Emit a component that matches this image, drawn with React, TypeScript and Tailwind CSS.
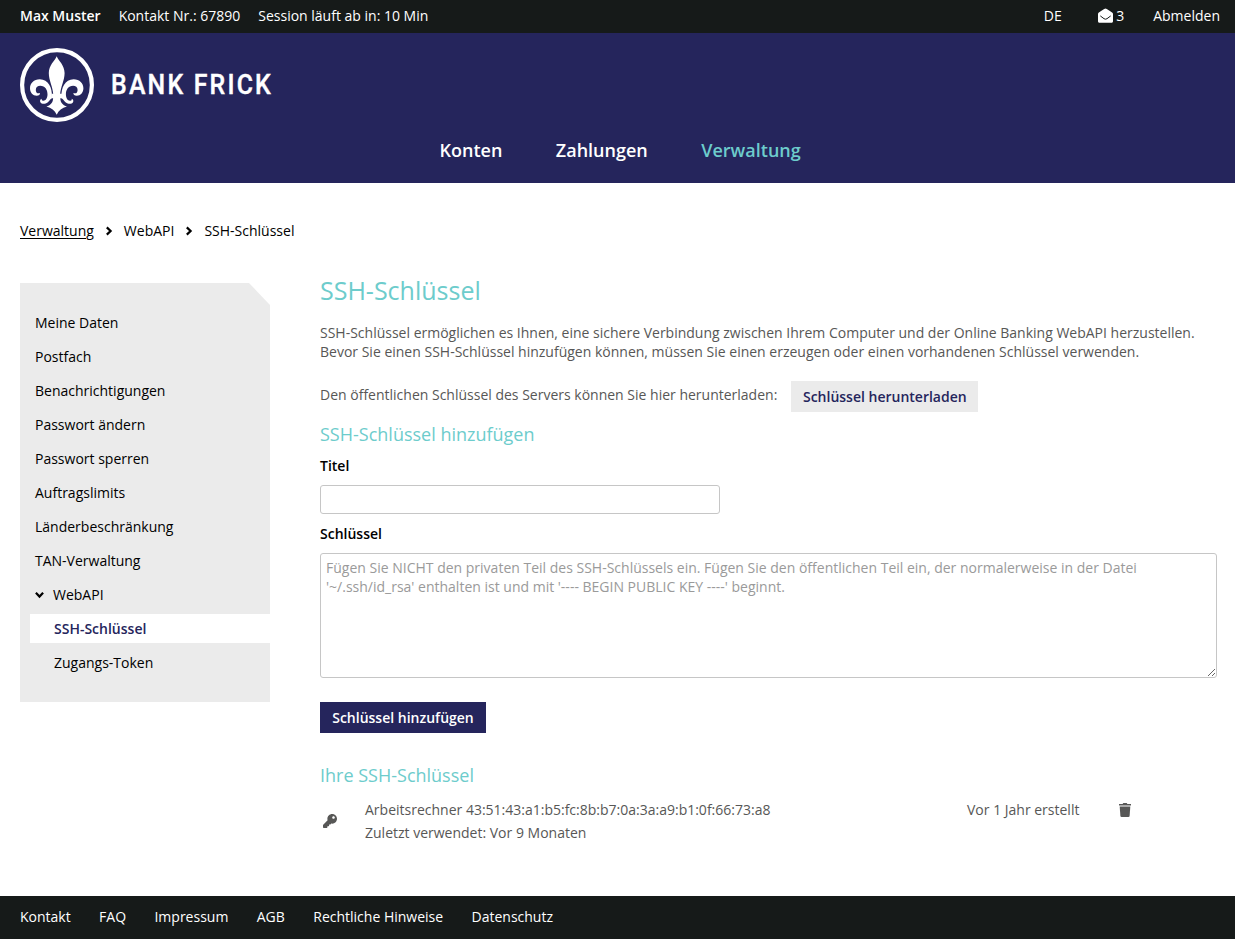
import React from "react";
import { FaKey } from "react-icons/fa";

const sideItems = [
  "Meine Daten",
  "Postfach",
  "Benachrichtigungen",
  "Passwort ändern",
  "Passwort sperren",
  "Auftragslimits",
  "Länderbeschränkung",
  "TAN-Verwaltung",
];

const footerItems = ["Kontakt", "FAQ", "Impressum", "AGB", "Rechtliche Hinweise", "Datenschutz"];

function Chevron({ className }: { className?: string }) {
  return (
    <svg viewBox="0 0 8 10" className={className} fill="none" stroke="#000" strokeWidth="2.2">
      <path d="M1.8 1.4 L5.6 5 L1.8 8.6" />
    </svg>
  );
}

function OpenEnvelope() {
  return (
    <svg viewBox="0 0 15 15" className="mr-[3px] h-[15px] w-[15px]">
      <path d="M7.5 0.4 C8.3 0.4 14 4.2 14.6 4.9 C14.9 5.2 15 5.5 15 5.9 V13.2 C15 14.1 14.4 14.7 13.5 14.7 H1.5 C0.6 14.7 0 14.1 0 13.2 V5.9 C0 5.5 0.1 5.2 0.4 4.9 C1 4.2 6.7 0.4 7.5 0.4Z" fill="#fff" />
      <path d="M2.3 7.9 L6 10.7 Q7.5 11.7 9 10.7 L12.7 7.9" fill="none" stroke="#161a19" strokeWidth="1" />
    </svg>
  );
}

function Trash() {
  return (
    <svg viewBox="0 0 12 14" className="mt-[5px] h-[14px] w-[12px]" fill="#575756">
      <path d="M0 1 H3.6 L4.3 0 H7.7 L8.4 1 H12 V2.4 H0Z" />
      <path d="M0.7 3.4 H11.3 L10.6 12.9 Q10.5 14 9.4 14 H2.6 Q1.5 14 1.4 12.9Z" />
    </svg>
  );
}

function Lily() {
  return (
    <svg viewBox="0 0 74 74" className="h-[74px] w-[74px] shrink-0" fill="#fff">
      <circle cx="37" cy="37" r="34.9" fill="none" stroke="#fff" strokeWidth="4.2" />
      <path d="M36.7 8.3 C38.5 13 44.6 17 44.6 25 C44.6 33 40.6 38 40.1 47 L33.3 47 C32.8 38 28.8 33 28.8 25 C28.8 17 34.9 13 36.7 8.3Z" />
      <path d="M31.9 48.6 C32.4 40 28.4 31.3 19.8 31.3 C13.8 31.3 10 35.6 10 40.3 C10 44.8 13 47.8 16.6 47.8 C18.8 47.8 20.3 46.6 20 45 C17.3 46.2 15.8 44.2 15.8 41.9 C15.8 39.3 17.8 37.8 20.3 37.8 C25 37.8 27.6 41.8 27.5 46.5 C27.4 50.2 25.6 52.9 23.2 52.7 C21.6 52.6 21.3 51.8 21.9 50.7 C20.2 51 19.6 52.8 20.4 54.2 C21.6 56.2 25.3 56.2 27.6 54.4 C29.6 52.8 30.3 50.8 31.9 50.2Z" />
      <path d="M41.5 48.6 C41 40 45 31.3 53.6 31.3 C59.6 31.3 63.4 35.6 63.4 40.3 C63.4 44.8 60.4 47.8 56.8 47.8 C54.6 47.8 53.1 46.6 53.4 45 C56.1 46.2 57.6 44.2 57.6 41.9 C57.6 39.3 55.6 37.8 53.1 37.8 C48.4 37.8 45.8 41.8 45.9 46.5 C46 50.2 47.8 52.9 50.2 52.7 C51.8 52.6 52.1 51.8 51.5 50.7 C53.2 51 53.8 52.8 53 54.2 C51.8 56.2 48.1 56.2 45.8 54.4 C43.8 52.8 43.1 50.8 41.5 50.2Z" />
      <path d="M31.4 45.8 H42 V50.3 H40.3 C40.3 54 42.4 57.2 47 58.6 C42 60.2 38.6 62.5 36.7 66.7 C34.8 62.5 31.4 60.2 26.4 58.6 C31 57.2 33.1 54 33.1 50.3 H31.4Z" />
    </svg>
  );
}

export default function App() {
  return (
    <div className="flex min-h-[939px] flex-col bg-white font-['Open_Sans',sans-serif] text-[14px] leading-[19px] text-black">
      <div className="flex h-[33px] items-center bg-[#161a19] pr-[15px] pb-[2px] pl-5 text-white">
        <span className="font-semibold">Max Muster</span>
        <span className="ml-[18px]">Kontakt Nr.: 67890</span>
        <span className="ml-[18px]">Session läuft ab in: 10 Min</span>
        <span className="ml-auto">DE</span>
        <span className="ml-[36.5px] flex items-center">
          <OpenEnvelope />3
        </span>
        <span className="ml-[29px]">Abmelden</span>
      </div>

      <header className="flex h-[150px] flex-col bg-[#25255c] text-white">
        <div className="flex items-center pt-[15px] pl-5">
          <Lily />
          <span className="ml-[17px] origin-left scale-x-[0.92] font-['Roboto',sans-serif] text-[27px] leading-8 font-medium tracking-[2.4px] [-webkit-text-stroke:0.4px_white]">
            BANK FRICK
          </span>
        </div>
        <nav className="mt-4 flex gap-[53.5px] pl-[439.5px] text-[18px] leading-6 font-semibold">
          <span>Konten</span>
          <span>Zahlungen</span>
          <span className="text-[#6dcccc]">Verwaltung</span>
        </nav>
      </header>

      <div className="mt-[38px] flex items-center pl-5">
        <span className="underline underline-offset-2">Verwaltung</span>
        <Chevron className="mx-[11px] h-[10px] w-2" />
        <span>WebAPI</span>
        <Chevron className="mx-[11px] h-[10px] w-2" />
        <span>SSH-Schlüssel</span>
      </div>

      <div className="mt-[43px] flex items-start pl-5">
        <aside className="flex h-[419px] w-[250px] shrink-0 flex-col bg-[#ebebeb] pt-[25px] [clip-path:polygon(0_0,229px_0,250px_22px,250px_100%,0_100%)]">
          {sideItems.map((item) => (
            <div key={item} className="mb-[5px] flex h-[29px] items-center pl-[15px]">
              {item}
            </div>
          ))}
          <div className="mb-[5px] flex h-[29px] items-center pl-[15px]">
            <Chevron className="mr-[9px] h-[10px] w-[9px] rotate-90" />
            WebAPI
          </div>
          <div className="mb-[5px] ml-[10px] flex h-[29px] items-center bg-white pl-6 font-semibold text-[#25255c]">
            SSH-Schlüssel
          </div>
          <div className="flex h-[29px] items-center pl-[34px]">Zugangs-Token</div>
        </aside>

        <main className="ml-[50px] flex w-[897px] flex-col items-start text-[#575756]">
          <h1 className="-mt-[9px] text-[25px] leading-8 text-[#6dcccc]">SSH-Schlüssel</h1>
          <p className="mt-[17px] whitespace-nowrap">
            SSH-Schlüssel ermöglichen es Ihnen, eine sichere Verbindung zwischen Ihrem Computer und der Online Banking WebAPI herzustellen.
            <br />
            Bevor Sie einen SSH-Schlüssel hinzufügen können, müssen Sie einen erzeugen oder einen vorhandenen Schlüssel verwenden.
          </p>
          <div className="mt-5 flex">
            <span className="mt-1">Den öffentlichen Schlüssel des Servers können Sie hier herunterladen:</span>
            <button className="ml-[14px] h-[31px] w-[187px] bg-[#ebebeb] font-semibold text-[#25255c]">
              Schlüssel herunterladen
            </button>
          </div>
          <h2 className="mt-[10px] text-[18px] leading-[25px] text-[#6dcccc]">SSH-Schlüssel hinzufügen</h2>
          <label className="mt-[9px] font-semibold text-black">Titel</label>
          <input className="mt-[10px] h-[29px] w-[400px] rounded-[3px] border border-[#c6c6c6] px-[5px] outline-none" />
          <label className="mt-[10px] font-semibold text-black">Schlüssel</label>
          <textarea
            className="mt-[10px] h-[125px] w-[897px] rounded-[3px] border border-[#c6c6c6] px-[5px] py-1 outline-none placeholder:text-[#9a9a9a]"
            placeholder="Fügen Sie NICHT den privaten Teil des SSH-Schlüssels ein. Fügen Sie den öffentlichen Teil ein, der normalerweise in der Datei '~/.ssh/id_rsa' enthalten ist und mit '---- BEGIN PUBLIC KEY ----' beginnt."
          />
          <button className="mt-6 h-[31px] w-[166px] bg-[#25255c] font-semibold text-white">Schlüssel hinzufügen</button>
          <h2 className="mt-[30px] text-[18px] leading-[25px] text-[#6dcccc]">Ihre SSH-Schlüssel</h2>
          <div className="mt-[10px] flex w-full">
            <FaKey className="mt-4 ml-[3px] h-[14px] w-[14px]" />
            <div className="ml-7 flex w-[602px] flex-col leading-[23px]">
              <span>Arbeitsrechner 43:51:43:a1:b5:fc:8b:b7:0a:3a:a9:b1:0f:66:73:a8</span>
              <span>Zuletzt verwendet: Vor 9 Monaten</span>
            </div>
            <span className="w-[152px] leading-[23px]">Vor 1 Jahr erstellt</span>
            <Trash />
          </div>
        </main>
      </div>

      <footer className="mt-auto flex h-[43px] items-center gap-[28.4px] bg-[#161a19] pb-[2px] pl-5 text-white">
        {footerItems.map((item) => (
          <span key={item}>{item}</span>
        ))}
      </footer>
    </div>
  );
}
